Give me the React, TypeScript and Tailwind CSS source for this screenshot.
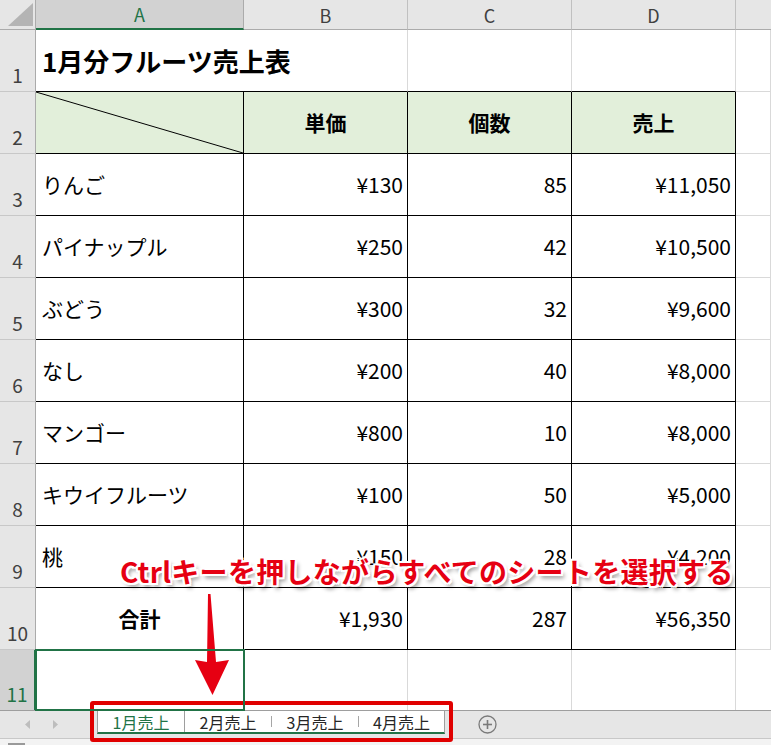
import React from "react";

const data: [string, string, string, string][] = [
  ["りんご", "¥130", "85", "¥11,050"],
  ["パイナップル", "¥250", "42", "¥10,500"],
  ["ぶどう", "¥300", "32", "¥9,600"],
  ["なし", "¥200", "40", "¥8,000"],
  ["マンゴー", "¥800", "10", "¥8,000"],
  ["キウイフルーツ", "¥100", "50", "¥5,000"],
  ["桃", "¥150", "28", "¥4,200"],
];

const rowHead =
  "flex items-end justify-center pb-[7px] bg-[#e6e6e6] border-r border-r-[#ababab] border-b border-b-[#c8c8c8] text-[19px] text-[#404040] leading-none";
const colHead =
  "flex items-center justify-center bg-[#e6e6e6] border-r border-r-[#c0c0c0] border-b border-b-[#ababab] text-[18px] text-[#404040] leading-none";
const tcell = "flex items-center border-r border-b border-black text-[21px] text-black leading-none";
const gcell = "border-r border-b border-[#d9d9d9]";

export default function App() {
  return (
    <div className="relative w-[771px] h-[745px] overflow-hidden bg-white font-['Noto_Sans_CJK_JP',sans-serif]">
      <div className="grid grid-cols-[36px_208px_164px_164px_164px_35px] grid-rows-[30px_repeat(10,62px)_60px] h-[710px]">
        {/* header row */}
        <div className="relative bg-[#e6e6e6] border-r border-r-[#ababab] border-b border-b-[#ababab]">
          <svg className="absolute left-0 top-0" width="36" height="30">
            <polygon points="8,26 33,26 33,3" fill="#b4b4b4" />
          </svg>
        </div>
        <div className="flex items-center justify-center bg-[#d2d2d2] border-r border-r-[#ababab] border-b-2 border-b-[#217346] text-[18px] text-[#217346] leading-none">
          A
        </div>
        <div className={colHead}>B</div>
        <div className={colHead}>C</div>
        <div className={colHead}>D</div>
        <div className="bg-[#e6e6e6] border-b border-b-[#ababab]" />

        {/* row 1 */}
        <div className={rowHead}>1</div>
        <div className="flex items-center pl-[6px] border-b border-b-black text-[26px] font-bold text-black leading-none whitespace-nowrap z-10">
          1月分フルーツ売上表
        </div>
        <div className="border-r border-r-[#d9d9d9] border-b border-b-black" />
        <div className="border-r border-r-[#d9d9d9] border-b border-b-black" />
        <div className="border-r border-r-[#d9d9d9] border-b border-b-black" />
        <div className={gcell} />

        {/* row 2 */}
        <div className={rowHead}>2</div>
        <div className="relative border-r border-b border-black bg-[#e2efda]">
          <svg className="absolute inset-0 w-full h-full" preserveAspectRatio="none" viewBox="0 0 100 100">
            <line x1="0" y1="0" x2="100" y2="100" stroke="#000" strokeWidth="1" vectorEffect="non-scaling-stroke" />
          </svg>
        </div>
        <div className={tcell + " justify-center bg-[#e2efda] font-bold"}>単価</div>
        <div className={tcell + " justify-center bg-[#e2efda] font-bold"}>個数</div>
        <div className={tcell + " justify-center bg-[#e2efda] font-bold"}>売上</div>
        <div className={gcell} />

        {data.map((r, i) => (
          <React.Fragment key={i}>
            <div className={rowHead}>{i + 3}</div>
            <div className={tcell + " pl-[6px]"}>{r[0]}</div>
            <div className={tcell + " justify-end pr-[4px]"}>{r[1]}</div>
            <div className={tcell + " justify-end pr-[4px]"}>{r[2]}</div>
            <div className={tcell + " justify-end pr-[4px]"}>{r[3]}</div>
            <div className={gcell} />
          </React.Fragment>
        ))}

        {/* row 10 */}
        <div className={rowHead}>10</div>
        <div className={tcell + " justify-center font-bold"}>合計</div>
        <div className={tcell + " justify-end pr-[4px]"}>¥1,930</div>
        <div className={tcell + " justify-end pr-[4px]"}>287</div>
        <div className={tcell + " justify-end pr-[4px]"}>¥56,350</div>
        <div className={gcell} />

        {/* row 11 */}
        <div className="flex items-end justify-center pb-[7px] bg-[#d2d2d2] border-r-2 border-r-[#217346] text-[19px] text-[#217346] leading-none">
          11
        </div>
        <div className="relative z-10 outline-2 outline-[#217346] -outline-offset-1" />
        <div className="border-r border-r-[#d9d9d9]" />
        <div className="border-r border-r-[#d9d9d9]" />
        <div className="border-r border-r-[#d9d9d9]" />
        <div />
      </div>

      {/* sheet tab bar */}
      <div className="flex h-[29px] bg-[#e6e6e6] border-t border-t-[#9e9e9e] border-b border-b-[#c8c8c8]">
        <div className="flex w-[97px] items-center">
          <svg className="ml-[25px]" width="6" height="9" viewBox="0 0 6 9">
            <polygon points="5,0 5,9 0,4.5" fill="#bdbdbd" />
          </svg>
          <svg className="ml-[22px]" width="6" height="9" viewBox="0 0 6 9">
            <polygon points="0,0 0,9 5,4.5" fill="#bdbdbd" />
          </svg>
        </div>
        <div className="flex h-[23px] w-[348px] bg-white border-l border-l-[#9e9e9e] border-r border-r-[#9e9e9e] border-b-2 border-b-[#217346] text-[16px] leading-none">
          <div className="flex w-[87px] items-center justify-center border-r border-r-[#9e9e9e] text-[#217346]">
            1月売上
          </div>
          <div className="flex w-[86px] items-center justify-center text-[#262626]">2月売上</div>
          <div className="w-px h-[11px] self-center bg-[#a6a6a6]" />
          <div className="flex w-[86px] items-center justify-center text-[#262626]">3月売上</div>
          <div className="w-px h-[11px] self-center bg-[#a6a6a6]" />
          <div className="flex flex-1 items-center justify-center text-[#262626]">4月売上</div>
        </div>
        <div className="flex items-center ml-[33px]">
          <svg width="19" height="19" viewBox="0 0 19 19">
            <circle cx="9.5" cy="9.5" r="8.5" fill="none" stroke="#7a7a7a" strokeWidth="1.3" />
            <line x1="5" y1="9.5" x2="14" y2="9.5" stroke="#7a7a7a" strokeWidth="1.6" />
            <line x1="9.5" y1="5" x2="9.5" y2="14" stroke="#7a7a7a" strokeWidth="1.6" />
          </svg>
        </div>
      </div>
      <div className="h-[6px] bg-[#f3f3f3] pl-[8px] pt-[4px]">
        <div className="w-[17px] h-[2px] bg-[#9a9a9a]" />
      </div>

      {/* annotation overlays */}
      <div className="absolute left-[120px] top-[555px] whitespace-nowrap text-[28px] tracking-[0.3px] font-bold leading-[32px] text-[#e60012] [text-shadow:2px_0_0_#fff,-2px_0_0_#fff,0_2px_0_#fff,0_-2px_0_#fff,2px_2px_0_#fff,-2px_-2px_0_#fff,2px_-2px_0_#fff,-2px_2px_0_#fff,3px_4px_4px_rgba(0,0,0,0.45)]">
        Ctrlキーを押しながらすべてのシートを選択する
      </div>
      <svg className="absolute left-[190px] top-[590px]" width="45" height="110" viewBox="190 590 45 110">
        <polygon
          points="208,594 210.5,594 216,662 229,660 212.5,695 195,660 207,662"
          fill="#e60012"
        />
      </svg>
      <div className="absolute left-[90px] top-[701px] w-[363px] h-[41px] border-4 border-[#e00000] rounded-[3px]" />
    </div>
  );
}
